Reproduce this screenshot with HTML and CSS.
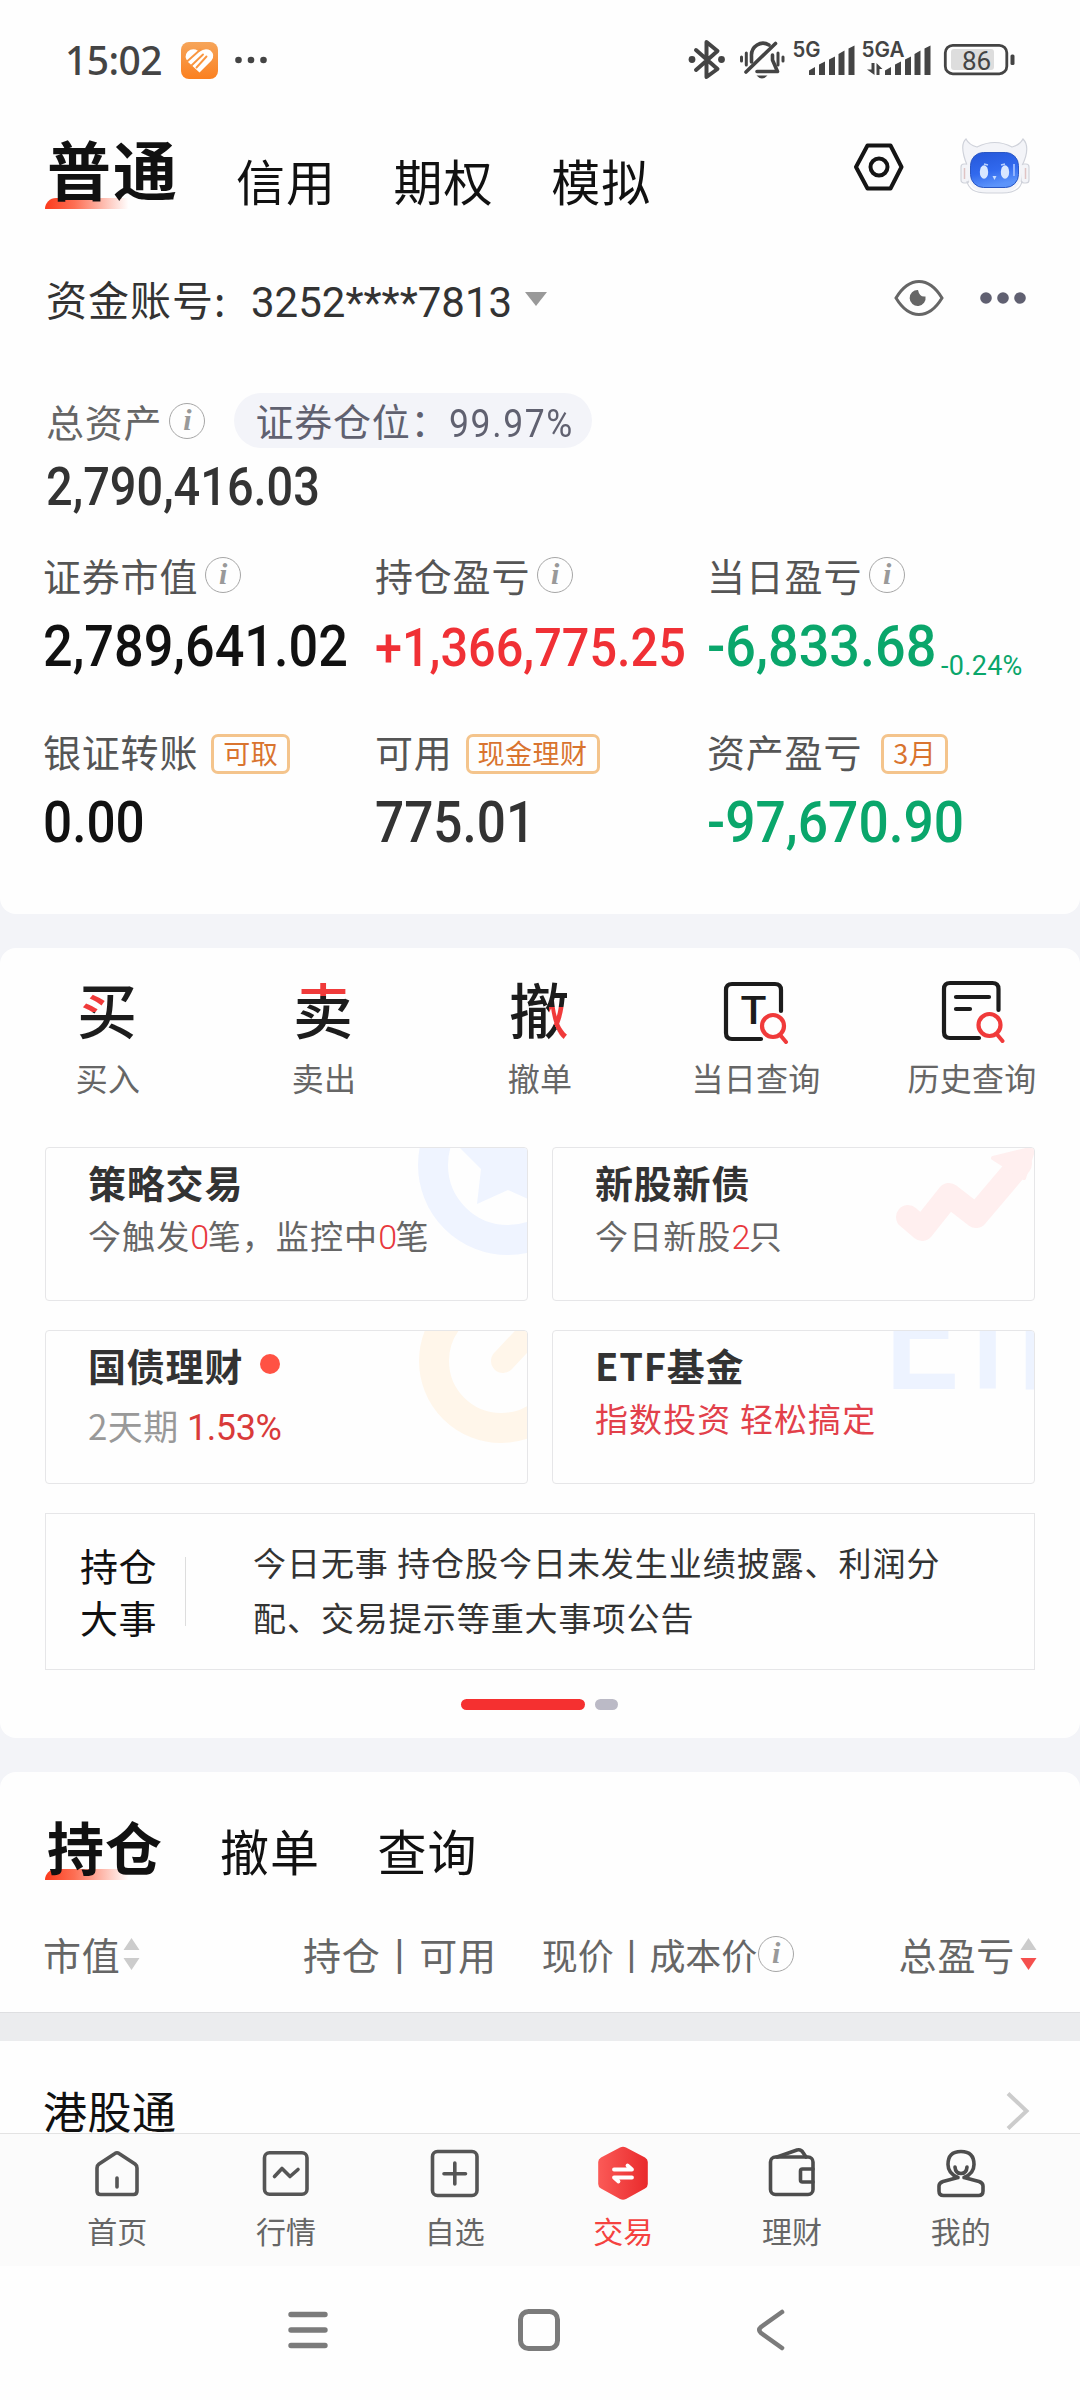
FILE: index.html
```html
<!DOCTYPE html>
<html lang="zh-CN">
<head>
<meta charset="utf-8">
<title>交易</title>
<link rel="stylesheet" href="styles.css">
</head>
<body>
<div class="screen">

  <section class="panel account">
    <header class="status">
      <span class="clock">15:02</span>
      <svg class="app-badge" width="37" height="37" viewBox="0 0 37 37">
        <defs><linearGradient id="og" x1="0" y1="0" x2="0" y2="1"><stop offset="0" stop-color="#f6a55a"/><stop offset="1" stop-color="#fb8020"/></linearGradient></defs>
        <rect width="37" height="37" rx="8" fill="url(#og)"/>
        <path d="M18.500 30.500 L7 20 Q2.500 14.500 6.500 9.800 Q11.500 5.500 17 8.800 L18.500 9.800 Q24 5.500 29.500 8.500 Q34.500 13 30.500 18.500Z" fill="#fff"/>
        <path d="M6 19.500 L19.500 7.500 M10.500 23.500 L22 12.500 M15.500 25.500 L25.500 14.500" fill="none" stroke="#f99640" stroke-width="1.900" stroke-linecap="round"/>
      </svg>
      <svg class="more-dots" width="32" height="8" viewBox="0 0 32 8" fill="#444"><circle cx="3.500" cy="4" r="3.300"/><circle cx="16" cy="4" r="3.300"/><circle cx="28.500" cy="4" r="3.300"/></svg>
      <svg class="indicators" width="334" height="44" viewBox="686 38 334 44" fill="none" stroke="#444" stroke-linecap="round" stroke-linejoin="round">
        <path d="M696 50 L717.500 69 L706.500 77 V42 L717.500 51 L696 70" stroke-width="4"/>
        <g fill="#444" stroke="none"><circle cx="692" cy="59.500" r="3.400"/><circle cx="721.500" cy="59.500" r="3.400"/></g>
        <path d="M775.500 43.500 L746 72" stroke-width="3.600"/>
        <path d="M751.500 62 V56 A11.500 12 0 0 1 769 45 M772.500 55 V60 L777.500 71.500 H757" stroke-width="3.600"/>
        <path d="M756.500 75.500 H767.500 Q762 81.500 756.500 75.500Z" fill="#444" stroke="none"/>
        <path d="M741.500 57 V61 M746.300 53 V65 M778 53 V65 M783 57 V61" stroke-width="3"/>
        <g fill="#444" stroke="none">
          <path d="M809 75 V70.500 L815 67 V75Z M819 75 V64.500 L825 61.500 V75Z M829 75 V59.500 L835 56.500 V75Z M838.500 75 V54 L844.500 50.500 V75Z M848.500 75 V48.500 L854.500 45.500 V75Z"/>
          <path d="M885 75 V70.500 L891 67 V75Z M895 75 V64.500 L901 61.500 V75Z M905 75 V59.500 L911 56.500 V75Z M914.500 75 V54 L920.500 50.500 V75Z M924.500 75 V48.500 L930.500 45.500 V75Z"/>
          <path d="M871.500 63 H874.500 V75 L867 69.500 H871.500Z M876.500 75 H879.500 V69 H882.500 L876.500 63Z"/>
          <rect x="951" y="49" width="43" height="21" rx="3" fill="#ddd"/>
          <rect x="1010.500" y="54.500" width="4" height="10.500" rx="1.500"/>
          <g font-family="Inter, Roboto, sans-serif" font-weight="600" font-size="21">
            <text x="792.500" y="57" textLength="28" lengthAdjust="spacingAndGlyphs">5G</text>
            <text x="861.500" y="57" textLength="43" lengthAdjust="spacingAndGlyphs">5GA</text>
            <text x="976.500" y="69.500" text-anchor="middle" font-family="Roboto, sans-serif" font-size="26" font-weight="400">86</text>
          </g>
        </g>
        <rect x="945.300" y="45.300" width="61.500" height="28.500" rx="7.500" stroke-width="2.800"/>
      </svg>
    </header>

    <nav class="tabs tabs-main">
      <span class="tab tab-on">普通</span>
      <span class="tab">信用</span>
      <span class="tab">期权</span>
      <span class="tab">模拟</span>
      <svg class="hex" width="50" height="48" viewBox="0 0 50 48" fill="none" stroke="#151515" stroke-width="4" stroke-linejoin="round">
        <path d="M13.500 2.500 H36.500 L47.500 24 L36.500 45.500 H13.500 L2 24Z"/><circle cx="25" cy="24" r="8.500"/>
      </svg>
      <svg class="robot" width="70" height="56" viewBox="0 0 70 56">
        <defs>
          <linearGradient id="rb" x1="0" y1="0" x2="0.300" y2="1"><stop offset="0" stop-color="#2557d8"/><stop offset="0.600" stop-color="#3169ee"/><stop offset="1" stop-color="#5b93fa"/></linearGradient>
        </defs>
        <g fill="#f3f4f8" stroke="#cfd2da" stroke-width="1.200">
          <path d="M7 27 Q-1 7 6 1 Q9 7 17 9 Q35 0 52 9 Q60 7 63 1 Q71 9 62 28Z"/>
          <rect x="1" y="26" width="8" height="19" rx="3"/><rect x="61" y="26" width="8" height="19" rx="3"/>
          <rect x="7" y="8" width="55" height="47" rx="20" stroke="none"/>
          <path d="M7 43 Q9 55 27 55 H42 Q60 55 62 43" fill="none"/>
        </g>
        <path d="M4.500 30 V41 M65.500 30 V41" stroke="#dfc4c4" stroke-width="1.500"/>
        <rect x="10.500" y="14.500" width="48" height="35" rx="13" fill="url(#rb)" stroke="#2a57c4" stroke-width="1"/>
        <path d="M54 26 V38" stroke="#91b4ff" stroke-width="2"/>
        <ellipse cx="24" cy="34" rx="4.200" ry="6.800" fill="#d9e7ff"/><ellipse cx="45" cy="34" rx="4.200" ry="6.800" fill="#d9e7ff"/>
        <path d="M24 26 l4 1 M45 26 l-4 1" stroke="#b8d0ff" stroke-width="1.500"/><path d="M32.500 38 h4 l-2 4z" fill="#c9ddff"/>
      </svg>
    </nav>

    <div class="acct">
      <span class="acct-label">资金账号:</span>
      <span class="acct-no">3252****7813</span>
      <svg class="caret" width="22" height="14" viewBox="0 0 22 14"><path d="M0 0 H22 L11 14Z" fill="#999"/></svg>
      <svg class="eye" width="50" height="38" viewBox="0 0 50 38"><path d="M2 19 Q12 2.500 25 2.500 Q38 2.500 48 19 Q38 35.500 25 35.500 Q12 35.500 2 19Z" fill="none" stroke="#666" stroke-width="3"/><path d="M24 11 A8 8 0 1 0 31.500 17.500 Q25.500 18.500 24 11Z" fill="#666"/></svg>
      <svg class="dots" width="46" height="12" viewBox="0 0 46 12" fill="#606071"><circle cx="6" cy="6" r="5.800"/><circle cx="23" cy="6" r="5.800"/><circle cx="40" cy="6" r="5.800"/></svg>
    </div>

    <div class="total-row">
      <span class="label muted">总资产</span>
      <span class="info info-total">i</span>
      <span class="pill"><span class="pill-label">证券仓位：</span><span class="pill-num">99.97%</span></span>
    </div>
    <div class="total"><span class="num num-total">2,790,416.03</span></div>

    <div class="metrics">
      <div class="metric">
        <div class="metric-head"><span class="label">证券市值</span><span class="info">i</span></div>
        <div class="metric-val"><span class="num">2,789,641.02</span></div>
      </div>
      <div class="metric">
        <div class="metric-head"><span class="label">持仓盈亏</span><span class="info">i</span></div>
        <div class="metric-val up"><span class="num">+1,366,775.25</span></div>
      </div>
      <div class="metric">
        <div class="metric-head"><span class="label">当日盈亏</span><span class="info">i</span></div>
        <div class="metric-val down"><span class="num num-day">-6,833.68</span><span class="pct">-0.24%</span></div>
      </div>
      <div class="metric">
        <div class="metric-head"><span class="label">银证转账</span><span class="tag">可取</span></div>
        <div class="metric-val"><span class="num num-short">0.00</span></div>
      </div>
      <div class="metric">
        <div class="metric-head"><span class="label">可用</span><span class="tag">现金理财</span></div>
        <div class="metric-val soft"><span class="num num-short">775.01</span></div>
      </div>
      <div class="metric">
        <div class="metric-head"><span class="label">资产盈亏</span><span class="tag tag-month">3月</span></div>
        <div class="metric-val down"><span class="num">-97,670.90</span></div>
      </div>
    </div>
  </section>

  <section class="panel tools">
    <div class="actions">
      <div class="action"><span class="glyph glyph-buy">买</span><span class="action-name">买入</span></div>
      <div class="action"><span class="glyph glyph-sell">卖</span><span class="action-name">卖出</span></div>
      <div class="action"><span class="glyph glyph-cancel">撤</span><span class="action-name">撤单</span></div>
      <div class="action">
        <svg width="66" height="64" viewBox="0 0 66 64" fill="none" stroke-linecap="round" stroke-width="4.200">
          <path d="M58 31 V10 Q58 4 52 4 H9 Q3 4 3 10 V53 Q3 59 9 59 H38" stroke="#1c1c1c"/>
          <text x="30.500" y="44" text-anchor="middle" font-family="Roboto, sans-serif" font-weight="500" font-size="38" textLength="26" lengthAdjust="spacingAndGlyphs" fill="#1c1c1c">T</text>
          <g stroke="#f03a3a"><circle cx="50" cy="46" r="11"/><path d="M58 56 L63 62" stroke-width="4"/></g>
        </svg>
        <span class="action-name">当日查询</span>
      </div>
      <div class="action">
        <svg width="66" height="64" viewBox="0 0 66 64" fill="none" stroke-linecap="round" stroke-width="4.200">
          <path d="M59.500 30 V9 Q59.500 3 53.500 3 H11 Q5 3 5 9 V52 Q5 58 11 58 H40 M17 17 H50 M17 29 H31" stroke="#1c1c1c"/>
          <g stroke="#f03a3a"><circle cx="50.500" cy="45" r="11"/><path d="M58.500 55 L63.500 61" stroke-width="4"/></g>
        </svg>
        <span class="action-name">历史查询</span>
      </div>
    </div>

    <div class="cards">
      <div class="card">
        <svg class="mark" width="160" height="152" viewBox="0 0 160 152"><circle cx="141" cy="17" r="75" fill="none" stroke="#eff4ff" stroke-width="30"/><path d="M93 0 L114 21 L110 56 L141 42 L172 56 L168 21 L188 0Z" fill="#eff4ff"/></svg>
        <b class="card-title">策略交易</b>
        <span class="card-sub">今触发<i>0</i>笔，监控中<i>0</i>笔</span>
      </div>
      <div class="card">
        <svg class="mark" width="160" height="152" viewBox="0 0 160 152"><path d="M34 69 L48 81 L75 47 L102 68 L146 16" fill="none" stroke="#ffefef" stroke-width="24" stroke-linecap="round" stroke-linejoin="round"/><path d="M119 10 L160 0 L150 30Z" fill="#ffefef" stroke="#ffefef" stroke-width="4" stroke-linejoin="round"/></svg>
        <b class="card-title">新股新债</b>
        <span class="card-sub">今日新股<i>2</i>只</span>
      </div>
      <div class="card">
        <svg class="mark" width="160" height="152" viewBox="0 0 160 152" fill="none" stroke="#fff6ea"><circle cx="134" cy="30" r="67" stroke-width="30"/><path d="M136 30 L170 -6" stroke-width="24" stroke-linecap="round"/></svg>
        <b class="card-title">国债理财<span class="red-dot"></span></b>
        <span class="card-sub card-rate">2天期 <i>1.53%</i></span>
      </div>
      <div class="card">
        <span class="mark mark-etf">ETF</span>
        <b class="card-title">ETF基金</b>
        <span class="card-sub card-red">指数投资 轻松搞定</span>
      </div>
    </div>

    <div class="events">
      <div class="events-title">持仓<br>大事</div>
      <div class="events-body">今日无事 持仓股今日未发生业绩披露、利润分<br>配、交易提示等重大事项公告</div>
    </div>
    <div class="pager"><span class="page page-on"></span><span class="page"></span></div>
  </section>

  <section class="panel holdings">
    <nav class="tabs tabs-hold">
      <span class="tab tab-on">持仓</span>
      <span class="tab">撤单</span>
      <span class="tab">查询</span>
    </nav>
    <div class="cols">
      <span class="col col-value">市值<svg class="sort" width="17" height="34" viewBox="0 0 17 34"><path d="M8.500 1 L16.500 13 H0.500Z M8.500 33 L16.500 21 H0.500Z" fill="#ccc"/></svg></span>
      <span class="col col-hold">持仓丨可用</span>
      <span class="col col-price">现价丨成本价<span class="info">i</span></span>
      <span class="col col-gain">总盈亏<svg class="sort" width="17" height="34" viewBox="0 0 17 34"><path d="M8.500 1 L16.500 13 H0.500Z" fill="#ccc"/><path d="M8.500 33 L16.500 21 H0.500Z" fill="#f5504e"/></svg></span>
    </div>
    <div class="divider"></div>
    <div class="market">
      <span>港股通</span>
      <svg width="24" height="40" viewBox="0 0 24 40"><path d="M2 2.500 L20.500 20 L2 37.500" fill="none" stroke="#ccc" stroke-width="4"/></svg>
    </div>
  </section>

  <nav class="tabbar">
    <a class="item">
      <svg width="56" height="56" viewBox="0 0 56 56" fill="none" stroke="#555" stroke-width="3.600" stroke-linecap="round" stroke-linejoin="round"><path d="M26 8.500 Q28 7 30 8.500 L46 19 Q48 20.500 48 23 V46 Q48 49.500 44.500 49.500 H11.500 Q8 49.500 8 46 V23 Q8 20.500 10 19Z M28 33 V42"/></svg>
      <span>首页</span></a>
    <a class="item">
      <svg width="56" height="56" viewBox="0 0 56 56" fill="none" stroke="#555" stroke-width="3.600" stroke-linecap="round" stroke-linejoin="round"><rect x="6.500" y="7.800" width="42.500" height="41.500" rx="5"/><path d="M16.500 31.500 L24 23.500 L32 31.500 L40 24.500"/></svg>
      <span>行情</span></a>
    <a class="item">
      <svg width="56" height="56" viewBox="0 0 56 56" fill="none" stroke="#555" stroke-width="3.600" stroke-linecap="round" stroke-linejoin="round"><rect x="5.500" y="6.500" width="44.500" height="44" rx="5"/><path d="M27.800 18 V39 M17 28.800 H38.500"/></svg>
      <span>自选</span></a>
    <a class="item item-on">
      <svg width="56" height="56" viewBox="0 0 56 56"><defs><linearGradient id="hx"><stop offset="0" stop-color="#fb5a57"/><stop offset="1" stop-color="#e92a2c"/></linearGradient></defs><path d="M25 2.500 Q28 1 31 2.500 L50 12.500 Q52.800 14 52.800 17 V39 Q52.800 42 50 43.500 L31 54 Q28 55.500 25 54 L6 43.500 Q3.200 42 3.200 39 V17 Q3.200 14 6 12.500Z" fill="url(#hx)"/><path d="M19 24.500 H37 L32.500 20.500 M37 32.500 H19 L23.500 36.500" fill="none" stroke="#fff" stroke-width="3.800" stroke-linecap="round" stroke-linejoin="round"/></svg>
      <span>交易</span></a>
    <a class="item">
      <svg width="56" height="56" viewBox="0 0 56 56" fill="none" stroke="#4d4d4d" stroke-width="3.600" stroke-linecap="round" stroke-linejoin="round"><rect x="6.500" y="12" width="42.500" height="37.500" rx="5"/><path d="M13 12 L33 5 Q37 4 39 7.500 L42 12 M49 24 H38.500 Q36.500 24 36.500 26 V35 Q36.500 37 38.500 37 H49"/></svg>
      <span>理财</span></a>
    <a class="item">
      <svg width="56" height="56" viewBox="0 0 56 56" fill="none" stroke="#4d4d4d" stroke-width="3.600" stroke-linecap="round" stroke-linejoin="round"><path d="M25 32.500 Q15 28.500 15 19.500 Q15 6.500 28 6.500 Q41 6.500 41 19.500 Q41 28.500 31 32.500 M25 32.500 L10 36.500 Q6 38 6 41 V46 Q6 50.500 10.500 50.500 H45.500 Q50 50.500 50 46 V41 Q50 38 46 36.500 L31 32.500"/><path d="M22 22 Q22.500 28.500 28 28.500 Q33.500 28.500 34 22"/></svg>
      <span>我的</span></a>
  </nav>

  <footer class="sysnav">
    <svg width="44" height="44" viewBox="0 0 44 44" fill="none" stroke="#7b7b7b" stroke-width="5.400" stroke-linecap="round"><path d="M5 6.500 H39 M5 22 H39 M5 37.500 H39"/></svg>
    <svg width="44" height="44" viewBox="0 0 44 44" fill="none" stroke="#7b7b7b" stroke-width="5"><rect x="3.500" y="3.500" width="37" height="37" rx="8"/></svg>
    <svg width="44" height="44" viewBox="0 0 44 44" fill="none" stroke="#7b7b7b" stroke-width="4.600" stroke-linecap="round" stroke-linejoin="round"><path d="M33 4 L12 19 Q8.500 22 12 25 L33 40"/></svg>
  </footer>
</div>
</body>
</html>
```
FILE: styles.css
```css
* { box-sizing: border-box; }
body {
  margin: 0;
  background: #f3f4f8;
  color: #111;
  font-family: "Noto Sans CJK SC", "Noto Sans", sans-serif;
}
svg { display: block; flex: none; }
.screen {
  width: 1080px;
  height: 2400px;
  display: flex;
  flex-direction: column;
  overflow: hidden;
  white-space: nowrap;
}
.panel { background: #fefefe; flex: none; }

/* account panel */
.account { height: 914px; border-radius: 0 0 16px 16px; }
.status {
  height: 120px;
  padding-left: 65px;
  display: flex;
  align-items: center;
}
.clock {
  width: 116px;
  font: 500 39px/40px "Noto Sans", Roboto, sans-serif;
  letter-spacing: -0.600px;
  color: #444;
}
.more-dots { margin-left: 17px; }
.indicators { margin-left: 419px; }

.tabs { display: flex; align-items: center; padding-left: 47px; }
.tab {
  font-size: 49px;
  line-height: 60px;
  letter-spacing: 1px;
  width: 157.600px;
}
.tab-on { font-weight: 700; position: relative; z-index: 0; }
.tab-on::before {
  content: "";
  position: absolute;
  z-index: -1;
  left: -2px;
  width: 84px;
  height: 11px;
  border-radius: 11px 0 0 0;
  background: linear-gradient(90deg, #fb3a1c, #fd6f54 35%, #fff);
}
.tabs-main { height: 94px; }
.tabs-main .tab { margin-top: 26px; }
.tabs-main .tab-on { margin-top: 0; width: 189px; font-size: 64px; letter-spacing: 2px; }
.tabs-main .tab-on::before { top: 61px; }
.hex { margin-left: 145px; }
.robot { margin-left: 56px; margin-top: -2px; }

.acct {
  height: 68px;
  margin-top: 50px;
  padding-left: 46px;
  display: flex;
  align-items: center;
}
.acct-label { width: 205px; font-size: 41px; letter-spacing: 1px; color: #333; line-height: 50px; }
.acct-no { width: 274px; margin-top: 9px; font: 400 42px/50px Roboto, sans-serif; color: #333; }
.caret { margin-top: 2px; }
.eye { margin-left: 347px; }
.dots { margin-left: 36px; }

.label { font-size: 38px; line-height: 40px; letter-spacing: 0.800px; color: #555; }
.label.muted { color: #666; }
.info {
  width: 36px;
  height: 36px;
  border: 1.600px solid #a6a6a6;
  border-radius: 50%;
  text-align: center;
  font: italic 700 30px/31px "Liberation Serif", serif;
  letter-spacing: 0;
  color: #999;
}
.total-row {
  height: 55px;
  margin-top: 61px;
  padding-left: 46px;
  display: flex;
  align-items: center;
}
.info-total { margin-left: 7px; }
.pill {
  margin-left: 29px;
  width: 358px;
  height: 55px;
  padding-left: 21px;
  border-radius: 28px;
  background: #f3f4f9;
  color: #606170;
  display: flex;
  align-items: center;
}
.pill-label { width: 194px; font-size: 38px; letter-spacing: 0.800px; line-height: 50px; margin-top: -2px; }
.pill-num {
  font: 400 39px/50px Roboto, sans-serif;
  transform: scaleX(.91);
  transform-origin: 0 50%;
  letter-spacing: 1.800px;
  margin-top: 6px;
}
.num {
  display: inline-block;
  transform: scaleX(.9);
  transform-origin: 0 50%;
}
.total {
  height: 50px;
  margin-top: 14px;
  padding-left: 46px;
  font: 500 53px/50px Roboto, sans-serif;
  color: #333;
}
.num-total { transform: scaleX(.885); }
.metrics {
  margin: 43px 0 0 43px;
  display: grid;
  grid-template-columns: 332px 332px 332px;
  row-gap: 56px;
}
.metric-head { height: 40px; display: flex; align-items: center; }
.metric-head .info { margin-left: 7px; }
.tag {
  height: 40px;
  margin: 6px 0 0 13px;
  padding: 0 9px;
  border: 3px solid #f4c48c;
  border-radius: 7px;
  font-size: 27px;
  line-height: 31px;
  letter-spacing: 0.500px;
  color: #d9742f;
}
.tag-month { margin-left: 19px; }
.metric-val {
  height: 60px;
  margin-top: 21px;
  margin-bottom: -1px;
  display: flex;
  font: 500 58px/60px Roboto, sans-serif;
}
.up { color: #f03035; font-size: 54px; padding-top: 2px; }
.down { color: #0aa66b; }
.down .num { transform: scaleX(.92); }
.down .num-day { transform: scaleX(.93); }
.num-short { transform: scaleX(.885); }
.soft { color: #333; }
.num-day { width: 234px; }
.pct { font-size: 27px; font-weight: 400; line-height: 100px; letter-spacing: 0.300px; }

/* tools panel */
.tools { height: 790px; margin-top: 34px; padding-top: 32px; border-radius: 16px; }
.actions { display: grid; grid-template-columns: repeat(5, 216px); }
.action { display: flex; flex-direction: column; align-items: center; }
.glyph {
  width: 62px;
  height: 64px;
  font-size: 60px;
  line-height: 56px;
  font-weight: 500;
  color: transparent;
  -webkit-background-clip: text;
  background-clip: text;
  background-color: #1c1c1c;
  background-repeat: no-repeat;
}
.glyph-buy { background-image: linear-gradient(#f03a3a, #f03a3a); background-position: 3px 13px; background-size: 25px 19px; }
.glyph-sell { background-image: linear-gradient(#f03a3a, #f03a3a); background-size: 60px 16px; }
.glyph-cancel { background-image: linear-gradient(63deg, transparent 38%, #f03a3a 38%); background-position: 40px 27px; background-size: 20px 36px; }
.action-name { margin-top: 15px; font-size: 32px; line-height: 36px; letter-spacing: 0.300px; color: #666; }

.cards {
  margin: 52px 45px 0;
  display: grid;
  grid-template-columns: 1fr 1fr;
  gap: 29px 24px;
}
.card {
  position: relative;
  height: 154px;
  padding: 14px 0 0 42px;
  border: 1.500px solid #e6e6e8;
  border-radius: 4px;
  overflow: hidden;
}
.mark { position: absolute; top: 0; right: 0; }
.mark-etf {
  left: 331px;
  right: auto;
  top: -88px;
  font: 500 155px/186px Roboto, sans-serif;
  letter-spacing: -14px;
  color: #edf3ff;
  transform: scaleX(.85);
  transform-origin: 0 0;
}
.card-title {
  position: relative;
  display: flex;
  align-items: center;
  height: 40px;
  font-size: 38px;
  letter-spacing: 0.800px;
  line-height: 40px;
  color: #333;
}
.red-dot { width: 20px; height: 20px; margin: -3px 0 0 17px; border-radius: 50%; background: #ff5244; }
.card-sub {
  position: relative;
  display: block;
  margin-top: 15px;
  font-size: 33px;
  line-height: 36px;
  letter-spacing: 1.100px;
  color: #666;
}
.card-sub i { font-style: normal; font-family: Roboto, sans-serif; font-weight: 300; font-size: 34px; letter-spacing: -1.500px; color: #e8383d; }
.card-rate { margin-top: 22px; font-size: 35px; letter-spacing: 0.400px; color: #999; }
.card-rate i { font-size: 36px; font-weight: 400; letter-spacing: -0.400px; color: #d93a3a; }
.card-red { color: #e2404a; }

.events {
  height: 157px;
  margin: 29px 45px 0;
  border: 1.500px solid #e6e6e8;
  display: flex;
  align-items: center;
}
.events-title {
  width: 140px;
  height: 69px;
  padding-left: 34px;
  padding-bottom: 2px;
  display: flex;
  align-items: center;
  border-right: 1px solid #ddd;
  font-size: 38px;
  line-height: 52px;
  letter-spacing: 0.600px;
}
.events-body { margin: -4px 0 0 67px; font-size: 33px; line-height: 55px; letter-spacing: 0.950px; color: #333; }
.pager { margin-top: 29px; padding-right: 2px; display: flex; justify-content: center; gap: 10px; }
.page { width: 23px; height: 11px; border-radius: 6px; background: #bbbac6; }
.page-on { width: 124px; background: #f53030; }

/* holdings panel */
.holdings { height: 361px; margin-top: 34px; padding-top: 28px; border-radius: 16px 16px 0 0; }
.tabs-hold { height: 90px; }
.tabs-hold .tab { margin-top: 10px; }
.tabs-hold .tab-on { margin-top: 0; width: 173px; font-size: 57px; letter-spacing: 1px; }
.tabs-hold .tab-on::before { top: 54px; }
.cols {
  height: 40px;
  margin-top: 44px;
  padding: 0 43px;
  display: flex;
  font-size: 38px;
  line-height: 40px;
  letter-spacing: 0.800px;
  color: #666;
}
.col { display: flex; align-items: center; }
.col-value { width: 260px; }
.col-hold { width: 239px; }
.col-price { width: 357px; font-size: 36px; letter-spacing: -0.100px; }
.col-price .info { margin-left: 1px; }
.col-value .sort { margin-left: 2px; }
.sort { margin-left: 5px; }
.divider { height: 29px; margin-top: 38px; background: #ebecee; border-top: 1px solid #dedfe1; }
.market {
  height: 92px;
  padding: 46px 50px 0 43px;
  display: flex;
  justify-content: space-between;
  font-size: 44px;
  line-height: 46px;
  letter-spacing: 0.500px;
}
.market svg { margin-top: 4px; }

/* bottom bars */
.tabbar {
  flex: none;
  height: 133px;
  padding: 11px 35px 0 33px;
  border-top: 1px solid #e3e3e3;
  background: #fbfbfb;
  display: grid;
  grid-template-columns: repeat(6, 1fr);
}
.item { display: flex; flex-direction: column; align-items: center; color: #666; }
.item span { margin-top: 12px; font-size: 30px; line-height: 34px; }
.item-on { color: #f5423f; }
.sysnav {
  flex: 1;
  background: #fefefe;
  display: flex;
  justify-content: center;
  gap: 187.500px;
  padding: 42px 2px 0 0;
}
```
